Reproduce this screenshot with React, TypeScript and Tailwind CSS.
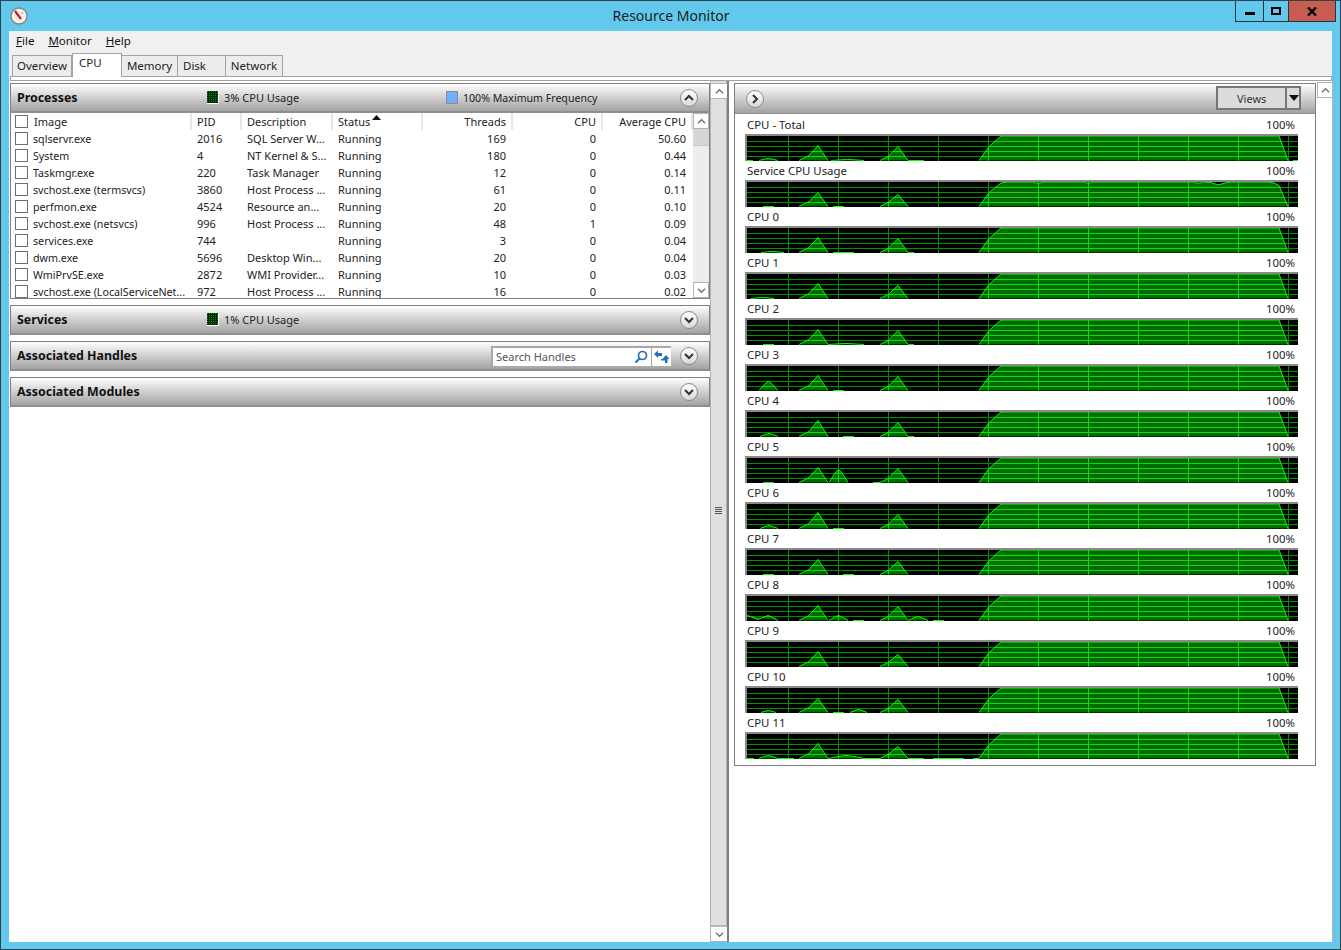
import { ReactNode, useId } from 'react';

type Pt = [number, number];

const processes = [
  ['sqlservr.exe', '2016', 'SQL Server W...', 'Running', '169', '0', '50.60'],
  ['System', '4', 'NT Kernel & S...', 'Running', '180', '0', '0.44'],
  ['Taskmgr.exe', '220', 'Task Manager', 'Running', '12', '0', '0.14'],
  ['svchost.exe (termsvcs)', '3860', 'Host Process ...', 'Running', '61', '0', '0.11'],
  ['perfmon.exe', '4524', 'Resource an...', 'Running', '20', '0', '0.10'],
  ['svchost.exe (netsvcs)', '996', 'Host Process ...', 'Running', '48', '1', '0.09'],
  ['services.exe', '744', '', 'Running', '3', '0', '0.04'],
  ['dwm.exe', '5696', 'Desktop Win...', 'Running', '20', '0', '0.04'],
  ['WmiPrvSE.exe', '2872', 'WMI Provider...', 'Running', '10', '0', '0.03'],
  ['svchost.exe (LocalServiceNet...', '972', 'Host Process ...', 'Running', '16', '0', '0.02']
];

const p1 = (h: number): Pt[] => [[52, 0], [62, 5], [71, h], [81, 0]];
const p2 = (h: number): Pt[] => [[133, 0], [141, 4], [151, h], [161, 0]];
const flat = (a: number, b: number): Pt[] => [[a, 0], [b, 0]];
const bump = (a: number, b: number, h: number): Pt[] => [
  [a, 0],
  [a + (b - a) * 0.3, h * 0.7],
  [(a + b) / 2, h],
  [b - (b - a) * 0.3, h * 0.7],
  [b, 0]
];
const busy: Pt[] = [[232, 0], [242, 14], [254, 24.5], [532, 24.5], [541, 0]];
const serviceBusy: Pt[] = [
  [232, 0], [242, 14], [254, 23.5], [260, 24.5], [286, 24.5], [288, 23.5], [294, 23.5], [296, 24.5],
  [337, 24.5], [339, 23.5], [344, 23.5], [346, 24.5], [447, 24.5], [449, 23.5], [454, 23.5], [456, 24.5],
  [464, 24], [471, 21.5], [478, 23.5], [484, 24.5], [521, 24.5], [527, 23.5], [532, 21], [541, 0]
];

const graphs: { label: string; shapes: Pt[][] }[] = [
  { label: 'CPU - Total', shapes: [flat(0, 6), bump(12, 31, 2), p1(15), bump(84, 117, 1), p2(14), flat(161, 177), busy, flat(546, 551)] },
  { label: 'Service CPU Usage', shapes: [flat(16, 27), p1(14), flat(86, 97), p2(12), serviceBusy] },
  { label: 'CPU 0', shapes: [bump(14, 37, 1), p1(15), flat(86, 107), p2(14), flat(161, 167), busy] },
  { label: 'CPU 1', shapes: [bump(4, 27, 1), p1(15), p2(13), busy] },
  { label: 'CPU 2', shapes: [flat(16, 27), p1(15), bump(81, 117, 1), p2(14), flat(161, 167), busy] },
  { label: 'CPU 3', shapes: [bump(12, 31, 9), p1(15), flat(86, 97), p2(14), busy] },
  { label: 'CPU 4', shapes: [bump(13, 31, 3), p1(16), flat(96, 107), p2(14), flat(161, 167), busy] },
  { label: 'CPU 5', shapes: [flat(16, 27), p1(15), bump(82, 101, 13), flat(126, 133), p2(14), busy] },
  { label: 'CPU 6', shapes: [bump(13, 31, 3), p1(16), flat(86, 97), p2(14), busy] },
  { label: 'CPU 7', shapes: [flat(16, 27), p1(15), flat(96, 107), p2(13), busy] },
  {
    label: 'CPU 8',
    shapes: [
      [[0, 5], [6, 3], [11, 1], [16, 3], [21, 5], [26, 3], [31, 0]],
      p1(15), bump(82, 101, 5), flat(106, 117), p2(14), bump(161, 181, 4), flat(186, 197), busy
    ]
  },
  { label: 'CPU 9', shapes: [p1(15), p2(12), busy] },
  { label: 'CPU 10', shapes: [bump(14, 29, 2), p1(14), flat(86, 97), bump(103, 120, 3), p2(13), busy] },
  {
    label: 'CPU 11',
    shapes: [
      flat(0, 7), bump(12, 31, 3), flat(31, 47), p1(15), bump(81, 117, 3), flat(117, 133), p2(12),
      flat(161, 177), flat(186, 217), flat(226, 232), busy
    ]
  }
];

const verticals = [41, 91, 141, 191, 241, 291, 341, 391, 441, 491, 541];
const horizontals = [5.5, 10.5, 15.5, 20.5];

const toSvg = (pts: Pt[]) => pts.map(([x, h]) => `${x},${24.5 - h}`).join(' ');

const Graph = ({ shapes }: { shapes: Pt[][] }) => {
  const clip = useId();
  return (
    <div className="h-[27px] w-[553px] border-t-2 border-l-2 border-[#8a8a8a] bg-black">
      <svg width="551" height="25" className="block">
        <defs>
          <clipPath id={clip}>
            {shapes.map((s, i) => (
              <polygon key={i} points={toSvg(s)} />
            ))}
          </clipPath>
        </defs>
        <g stroke="#009000" strokeWidth="1">
          {horizontals.map(y => <line key={y} x1="0" x2="551" y1={y} y2={y} />)}
          {verticals.map(x => <line key={x} x1={x + 0.5} x2={x + 0.5} y1="0" y2="25" />)}
        </g>
        {shapes.map((s, i) => (
          <polygon key={i} points={toSvg(s)} fill="#006b00" />
        ))}
        <g stroke="#10d810" strokeWidth="1" clipPath={`url(#${clip})`}>
          {horizontals.map(y => <line key={y} x1="0" x2="551" y1={y} y2={y} />)}
          {verticals.map(x => <line key={x} x1={x + 0.5} x2={x + 0.5} y1="0" y2="25" />)}
        </g>
        {shapes.map((s, i) => (
          <polyline key={i} points={toSvg(s)} fill="none" stroke="#00ff00" strokeWidth="1" />
        ))}
      </svg>
    </div>
  );
};

const Chevron = ({ dir, size = 10, color = '#333', width = 2 }: { dir: 'up' | 'down' | 'right'; size?: number; color?: string; width?: number }) => {
  const d = dir === 'up' ? 'M1 7 L5 3 L9 7' : dir === 'down' ? 'M1 3 L5 7 L9 3' : 'M3 1 L7 5 L3 9';
  return (
    <svg width={size} height={size} viewBox="0 0 10 10" className="block">
      <path d={d} fill="none" stroke={color} strokeWidth={width} />
    </svg>
  );
};

const RoundButton = ({ dir }: { dir: 'up' | 'down' | 'right' }) => (
  <div className="flex h-[18px] w-[18px] items-center justify-center rounded-full border border-[#8c8c8c] bg-gradient-to-b from-[#ffffff] to-[#d8d8d8]">
    <Chevron dir={dir} />
  </div>
);

const ScrollButton = ({ dir, className }: { dir: 'up' | 'down'; className?: string }) => (
  <div className={`flex h-[16px] w-[16px] shrink-0 items-center justify-center border border-[#b4b4b4] bg-white ${className ?? ''}`}>
    <Chevron dir={dir} size={9} color="#707070" width={1.4} />
  </div>
);

const Meter = () => (
  <svg width="12" height="13" className="block shrink-0">
    <defs>
      <pattern id="meter-dots" width="2" height="2" patternUnits="userSpaceOnUse">
        <rect width="2" height="2" fill="#002800" />
        <rect width="1" height="1" fill="#0c8a0c" />
      </pattern>
    </defs>
    <rect width="12" height="13" fill="white" />
    <rect width="11" height="12" fill="url(#meter-dots)" />
  </svg>
);

const SectionHeader = ({ title, children }: { title: string; children?: ReactNode }) => (
  <div className="flex h-[30px] shrink-0 items-center border border-b-2 border-[#7f7f7f] border-b-[#8f8f8f] bg-gradient-to-b from-[#ffffff] to-[#a3a3a3] pl-[6px] pr-[11px]">
    <span className="w-[190px] shrink-0 pt-[2px] text-[12.4px] font-bold text-[#111]">{title}</span>
    {children}
  </div>
);

const Usage = ({ text }: { text: string }) => (
  <div className="flex items-center gap-[5px]">
    <Meter />
    <span>{text}</span>
  </div>
);

const Check = () => <span className="h-[13px] w-[13px] shrink-0 border border-[#6f6f6f] bg-white" />;

const headerCell = 'flex h-[17px] shrink-0 items-center border-r-2 border-[#e6e6e6]';

const ProcessTable = () => (
  <div className="flex h-[186px] border-x border-b border-[#7f7f7f] bg-white">
    <div className="min-w-0 flex-1 overflow-hidden">
      <div className="flex">
        <div className={`${headerCell} w-[181px] gap-[6px] pl-[4px]`}><Check /><span>Image</span></div>
        <div className={`${headerCell} w-[50px] pl-[5px]`}>PID</div>
        <div className={`${headerCell} w-[91px] pl-[5px]`}>Description</div>
        <div className={`${headerCell} w-[90px] gap-[2px] pl-[5px]`}>
          <span>Status</span>
          <svg width="9" height="5" className="mb-[8px]"><path d="M0 5 L4.5 0 L9 5 Z" fill="#111" /></svg>
        </div>
        <div className={`${headerCell} w-[90px] justify-end pr-[5px]`}>Threads</div>
        <div className={`${headerCell} w-[90px] justify-end pr-[5px]`}>CPU</div>
        <div className={`${headerCell} w-[90px] justify-end pr-[5px]`}>Average CPU</div>
      </div>
      {processes.map(row => (
        <div key={row[1]} className="flex h-[17px] items-center">
          <div className="flex w-[181px] shrink-0 items-center gap-[5px] pl-[4px]"><Check /><span className="whitespace-nowrap pt-[2px] text-[10.7px]">{row[0]}</span></div>
          <div className="w-[50px] shrink-0 pl-[5px]">{row[1]}</div>
          <div className="w-[91px] shrink-0 whitespace-nowrap pl-[5px]">{row[2]}</div>
          <div className="w-[90px] shrink-0 pl-[5px]">{row[3]}</div>
          <div className="w-[90px] shrink-0 pr-[7px] text-right">{row[4]}</div>
          <div className="w-[90px] shrink-0 pr-[7px] text-right">{row[5]}</div>
          <div className="w-[90px] shrink-0 pr-[7px] text-right">{row[6]}</div>
        </div>
      ))}
    </div>
    <div className="flex w-[16px] shrink-0 flex-col bg-[#ededed]">
      <ScrollButton dir="up" />
      <div className="h-[17px] shrink-0 border-b border-[#c8c8c8] bg-[#d6d6d6]" />
      <div className="flex-1" />
      <ScrollButton dir="down" />
    </div>
  </div>
);

const App = () => {
  return (
    <div className="flex h-[950px] w-[1341px] flex-col border border-[#33424c] bg-[#63c9ec] text-[11px] leading-none text-[#222] font-['Noto_Sans','Liberation_Sans',sans-serif]">
      <div className="flex h-[30px] shrink-0 items-start">
        <div className="ml-[9px] mt-[6px] w-[18px]">
          <svg width="18" height="18" viewBox="0 0 18 18" className="block">
            <circle cx="9" cy="9" r="8" fill="#f4f1ec" stroke="#8a8580" strokeWidth="1.4" />
            <path d="M5 4 L11 12" stroke="#c82020" strokeWidth="2.2" />
            <path d="M12 5 L13 7" stroke="#9a9a9a" strokeWidth="1" />
          </svg>
        </div>
        <div className="flex-1 pt-[6px] pl-[79px] text-center text-[14px] leading-[17px] text-[#1c1c1c]">Resource Monitor</div>
        <div className="mr-[4px] flex h-[21px] border border-t-0 border-[#26343d]">
          <div className="flex w-[28px] items-center justify-center border-r border-[#26343d]">
            <span className="mt-[4px] h-[3px] w-[10px] bg-black" />
          </div>
          <div className="flex w-[25px] items-center justify-center border-r border-[#26343d]">
            <span className="h-[8px] w-[10px] border-2 border-black" />
          </div>
          <div className="flex w-[46px] items-center justify-center bg-[#c75c50]">
            <svg width="10" height="9" viewBox="0 0 10 9"><path d="M1 0.5 L9 8.5 M9 0.5 L1 8.5" stroke="#000" strokeWidth="2.4" /></svg>
          </div>
        </div>
      </div>

      <div className="mx-[8px] flex min-h-0 flex-1 flex-col bg-[#f0f0f0]">
        <div className="flex h-[21px] shrink-0 items-center gap-[14px] pb-[2px] pl-[7px] text-[11.5px] text-[#111]">
          <span><u>F</u>ile</span>
          <span><u>M</u>onitor</span>
          <span><u>H</u>elp</span>
        </div>
        <div className="flex h-[24px] shrink-0 items-end pl-[3px] text-[11.5px] text-[#222]">
          <div className="flex h-[21px] w-[60px] items-center justify-center border border-b-0 border-[#a2a2a2] bg-[#ececec]">Overview</div>
          <div className="z-10 -mb-[1px] flex h-[24px] w-[50px] items-start justify-start border border-b-0 border-[#a2a2a2] bg-white pl-[6px] pt-[3px]">CPU</div>
          <div className="flex h-[21px] w-[56px] items-center justify-center border-y border-r border-b-0 border-[#a2a2a2] bg-[#ececec]">Memory</div>
          <div className="flex h-[21px] w-[48px] items-center border-y border-r border-b-0 border-[#a2a2a2] bg-[#ececec] pl-[5px]">Disk</div>
          <div className="flex h-[21px] w-[57px] items-center justify-center border-y border-r border-b-0 border-[#a2a2a2] bg-[#ececec]">Network</div>
        </div>
        <div className="ml-[1px] h-[5px] shrink-0 border border-[#a2a2a2] bg-white" />

        <div className="flex min-h-0 flex-1 bg-white">
          <div className="flex w-[701px] shrink-0 flex-col gap-[6px] pl-[1px] pt-[2px]">
            <div className="flex flex-col">
              <SectionHeader title="Processes">
                <div className="w-[239px] shrink-0"><Usage text="3% CPU Usage" /></div>
                <div className="flex items-center gap-[5px]">
                  <span className="h-[13px] w-[12px] border border-[#8a8a8a] bg-[#6eb1ff]" />
                  <span className="pt-[2px] text-[10.6px]">100% Maximum Frequency</span>
                </div>
                <div className="ml-auto"><RoundButton dir="up" /></div>
              </SectionHeader>
              <ProcessTable />
            </div>
            <SectionHeader title="Services">
              <Usage text="1% CPU Usage" />
              <div className="ml-auto"><RoundButton dir="down" /></div>
            </SectionHeader>
            <SectionHeader title="Associated Handles">
              <div className="ml-auto flex h-[20px] w-[180px] items-center border-t-2 border-l-2 border-[#a8a8a8] bg-white pl-[3px] text-[#555]">
                <span className="flex-1">Search Handles</span>
                <svg width="14" height="14" viewBox="0 0 14 14" className="mr-[3px]">
                  <circle cx="8.5" cy="5.5" r="4" fill="none" stroke="#2a6db5" strokeWidth="1.7" />
                  <path d="M5.5 8.5 L1.5 12.5" stroke="#2a6db5" strokeWidth="2.2" />
                </svg>
                <span className="h-[18px] w-px bg-[#a8a8a8]" />
                <svg width="18" height="14" viewBox="0 0 18 14" className="ml-px">
                  <path d="M1 4 L5 0.5 L5 3 L9 3 L9 6 L5 6 L5 8 Z" fill="#2a6db5" />
                  <path d="M13 5 L16.5 9 L14.5 9 L14.5 13 L12 13 L12 10.5 L8 10.5 L8 9 L9.5 9 Z" fill="#2a6db5" />
                </svg>
              </div>
              <div className="ml-[9px]"><RoundButton dir="down" /></div>
            </SectionHeader>
            <SectionHeader title="Associated Modules">
              <div className="ml-auto"><RoundButton dir="down" /></div>
            </SectionHeader>
          </div>

          <div className="flex w-[17px] shrink-0 flex-col border-x border-[#b4b4b4] bg-[#dfdfdf] pt-[2px]">
            <ScrollButton dir="up" className="w-[15px] border-x-0" />
            <div className="flex flex-1 flex-col items-center justify-center gap-[1px] border-b border-[#b4b4b4] pb-[4px]">
              <span className="h-px w-[7px] bg-[#555]" />
              <span className="h-px w-[7px] bg-[#555]" />
              <span className="h-px w-[7px] bg-[#555]" />
              <span className="h-px w-[7px] bg-[#555]" />
            </div>
            <ScrollButton dir="down" className="w-[15px] border-x-0" />
          </div>
          <div className="w-[2px] shrink-0 bg-[#7f7f7f]" />

          <div className="ml-[5px] mt-[2px] flex h-[683px] w-[582px] shrink-0 flex-col self-start border border-[#7f7f7f]">
            <div className="flex h-[30px] shrink-0 items-center border-b border-[#8f8f8f] bg-gradient-to-b from-[#ffffff] to-[#a3a3a3] pl-[11px] pr-[14px]">
              <RoundButton dir="right" />
              <div className="mb-[1px] ml-auto flex h-[24px] w-[85px] items-center border-2 border-[#777] bg-[#dcdcdc] text-[#333]">
                <span className="w-[69px] text-center">Views</span>
                <span className="h-[20px] w-[2px] bg-[#777]" />
                <svg width="10" height="6" className="ml-[2px]"><path d="M0 0 L10 0 L5 6 Z" fill="#111" /></svg>
              </div>
            </div>
            <div className="flex flex-col pl-[10px] pt-[1px]">
              {graphs.map(g => (
                <div key={g.label}>
                  <div className="flex h-[19px] w-[550px] items-center justify-between pl-[2px] text-[11.4px] text-[#222]">
                    <span>{g.label}</span>
                    <span>100%</span>
                  </div>
                  <Graph shapes={g.shapes} />
                </div>
              ))}
            </div>
          </div>
          <div className="ml-px mt-[1px] flex w-[16px] shrink-0 flex-col border-r border-[#b4b4b4]">
            <ScrollButton dir="up" />
          </div>
        </div>
      </div>
      <div className="h-[7px] shrink-0" />
    </div>
  );
};

export default App;
